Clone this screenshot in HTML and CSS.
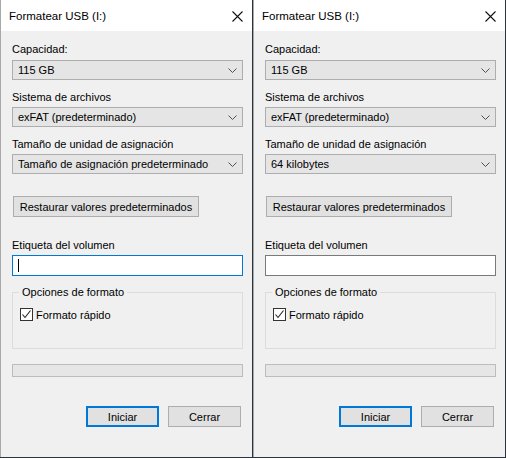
FILE: index.html
```html
<!DOCTYPE html>
<html lang="es">
<head>
<meta charset="utf-8">
<title>Formatear USB</title>
<link rel="stylesheet" href="styles.css">
</head>
<body>
<div class="desk">
  <div class="win">
    <div class="titlebar">
      <span class="title">Formatear USB (I:)</span>
      <svg class="close" width="11" height="11" viewBox="0 0 11 11"><path d="M0.5 0.5L10.5 10.5M10.5 0.5L0.5 10.5" stroke="#111" stroke-width="1.1" fill="none"/></svg>
    </div>
    <div class="content">
      <div class="label l1">Capacidad:</div>
      <div class="select"><span>115 GB</span><svg width="9" height="5" viewBox="0 0 9 5"><path d="M0.5 0.5L4.5 4.5L8.5 0.5" stroke="#505050" fill="none"/></svg></div>
      <div class="label">Sistema de archivos</div>
      <div class="select"><span>exFAT (predeterminado)</span><svg width="9" height="5" viewBox="0 0 9 5"><path d="M0.5 0.5L4.5 4.5L8.5 0.5" stroke="#505050" fill="none"/></svg></div>
      <div class="label">Tamaño de unidad de asignación</div>
      <div class="select"><span>Tamaño de asignación predeterminado</span><svg width="9" height="5" viewBox="0 0 9 5"><path d="M0.5 0.5L4.5 4.5L8.5 0.5" stroke="#505050" fill="none"/></svg></div>
      <div class="btn restore">Restaurar valores predeterminados</div>
      <div class="label l4">Etiqueta del volumen</div>
      <div class="input focus"><span class="caret"></span></div>
      <div class="group">
        <div class="legend">Opciones de formato</div>
        <div class="check"><span class="box"><svg width="11" height="11" viewBox="0 0 11 11"><path d="M1.5 5.5L4 8.5L9.5 1.5" stroke="#222" stroke-width="1.1" fill="none"/></svg></span><span>Formato rápido</span></div>
      </div>
      <div class="progress"></div>
      <div class="actions">
        <div class="btn primary">Iniciar</div>
        <div class="btn">Cerrar</div>
      </div>
    </div>
  </div>
  <div class="win">
    <div class="titlebar">
      <span class="title">Formatear USB (I:)</span>
      <svg class="close" width="11" height="11" viewBox="0 0 11 11"><path d="M0.5 0.5L10.5 10.5M10.5 0.5L0.5 10.5" stroke="#111" stroke-width="1.1" fill="none"/></svg>
    </div>
    <div class="content">
      <div class="label l1">Capacidad:</div>
      <div class="select"><span>115 GB</span><svg width="9" height="5" viewBox="0 0 9 5"><path d="M0.5 0.5L4.5 4.5L8.5 0.5" stroke="#505050" fill="none"/></svg></div>
      <div class="label">Sistema de archivos</div>
      <div class="select"><span>exFAT (predeterminado)</span><svg width="9" height="5" viewBox="0 0 9 5"><path d="M0.5 0.5L4.5 4.5L8.5 0.5" stroke="#505050" fill="none"/></svg></div>
      <div class="label">Tamaño de unidad de asignación</div>
      <div class="select"><span>64 kilobytes</span><svg width="9" height="5" viewBox="0 0 9 5"><path d="M0.5 0.5L4.5 4.5L8.5 0.5" stroke="#505050" fill="none"/></svg></div>
      <div class="btn restore">Restaurar valores predeterminados</div>
      <div class="label l4">Etiqueta del volumen</div>
      <div class="input"></div>
      <div class="group">
        <div class="legend">Opciones de formato</div>
        <div class="check"><span class="box"><svg width="11" height="11" viewBox="0 0 11 11"><path d="M1.5 5.5L4 8.5L9.5 1.5" stroke="#222" stroke-width="1.1" fill="none"/></svg></span><span>Formato rápido</span></div>
      </div>
      <div class="progress"></div>
      <div class="actions">
        <div class="btn primary">Iniciar</div>
        <div class="btn">Cerrar</div>
      </div>
    </div>
  </div>
</div>
</body>
</html>
```
FILE: styles.css
```css
html, body {
  margin: 0;
  padding: 0;
}
body {
  width: 506px;
  height: 458px;
  background: #2a3440;
  font-family: "Liberation Sans", Arial, sans-serif;
  font-size: 11px;
  color: #000;
  overflow: hidden;
  white-space: nowrap;
}
.desk {
  display: flex;
  gap: 1px;
  height: 457px;
}
.win {
  width: 252px;
  height: 457px;
  box-sizing: border-box;
  background: #f0f0f0;
  border-left: 1px solid #a8a8a8;
  display: flex;
  flex-direction: column;
}
.titlebar {
  height: 31px;
  background: #fff;
  display: flex;
  align-items: center;
  justify-content: space-between;
  padding: 0 9px 0 8px;
  flex: none;
}
.title {
  font-size: 11.5px;
  padding-top: 1px;
}
.close {
  margin-top: 1px;
}
.content {
  padding: 0 9px 0 11px;
  display: flex;
  flex-direction: column;
}
.label {
  height: 15px;
  line-height: 15px;
  margin-top: 10px;
  margin-bottom: 2px;
}
.label.l1 {
  margin-top: 11px;
  margin-bottom: 3px;
}
.select {
  height: 20px;
  flex: none;
  box-sizing: border-box;
  border: 1px solid #adadad;
  background: #e5e5e5;
  display: flex;
  align-items: center;
  justify-content: space-between;
  padding: 0 5px 0 5px;
}
.btn {
  height: 21px;
  flex: none;
  box-sizing: border-box;
  border: 1px solid #adadad;
  background: #e1e1e1;
  display: flex;
  align-items: center;
  justify-content: center;
}
.restore {
  width: 186px;
  margin-left: 1px;
  margin-top: 22px;
}
.label.l4 {
  margin-top: 21px;
  margin-bottom: 2px;
}
.input {
  height: 21px;
  flex: none;
  box-sizing: border-box;
  border: 1px solid #7a7a7a;
  background: #fff;
  display: flex;
  align-items: center;
  padding-left: 5px;
}
.input.focus {
  border-color: #0078d7;
}
.caret {
  width: 1px;
  height: 13px;
  background: #000;
}
.group {
  position: relative;
  margin-top: 16px;
  height: 57px;
  flex: none;
  box-sizing: border-box;
  border: 1px solid #dcdcdc;
  padding: 15px 0 0 7px;
}
.legend {
  position: absolute;
  top: -8px;
  left: 6px;
  padding: 0 3px;
  background: #f0f0f0;
  line-height: 15px;
}
.check {
  display: flex;
  align-items: center;
  gap: 3px;
}
.box {
  width: 13px;
  height: 13px;
  box-sizing: border-box;
  border: 1px solid #333;
  background: #fff;
  display: flex;
  align-items: center;
  justify-content: center;
}
.progress {
  margin-top: 15px;
  height: 13px;
  flex: none;
  box-sizing: border-box;
  border: 1px solid #bcbcbc;
  background: #e6e6e6;
}
.actions {
  margin-top: 29px;
  display: flex;
  justify-content: flex-end;
  gap: 9px;
  padding-right: 2px;
}
.actions .btn {
  width: 73px;
}
.btn.primary {
  border: 2px solid #0078d7;
}
```
